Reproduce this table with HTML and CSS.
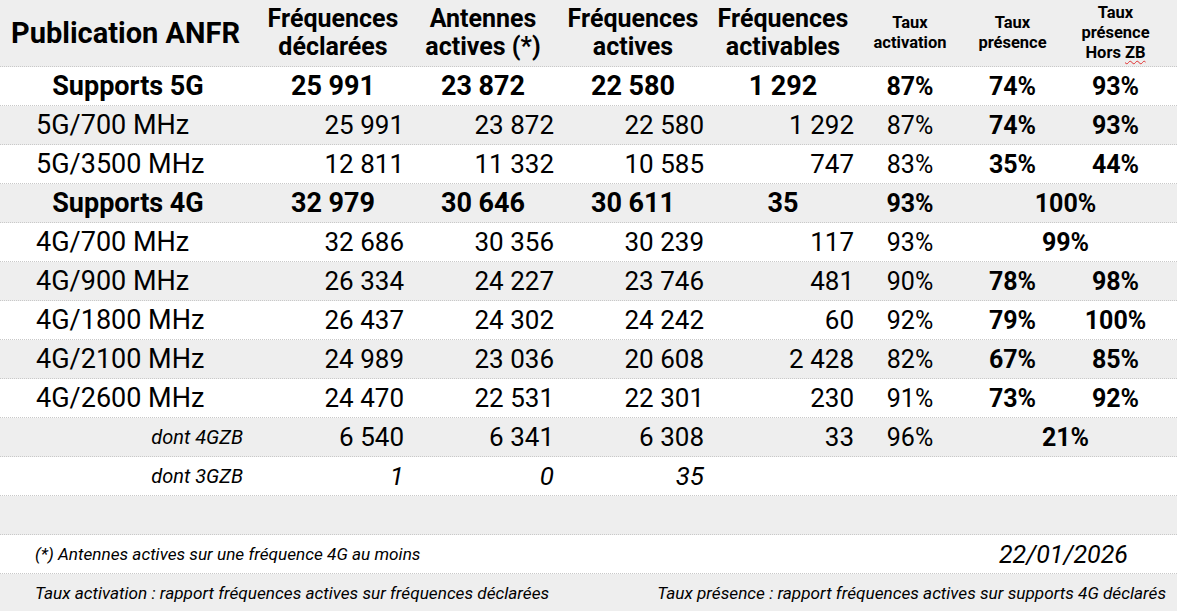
FILE: index.html
```html
<!DOCTYPE html>
<html lang="fr">
<head>
<meta charset="utf-8">
<title>Publication ANFR</title>
<link rel="stylesheet" href="styles.css">
</head>
<body>
<div class="sheet">
  <div class="row head">
    <div class="c title">Publication ANFR</div>
    <div class="c hcol">Fréquences<br>déclarées</div>
    <div class="c hcol">Antennes<br>actives (*)</div>
    <div class="c hcol">Fréquences<br>actives</div>
    <div class="c hcol">Fréquences<br>activables</div>
    <div class="c hsmall">Taux<br>activation</div>
    <div class="c hsmall">Taux<br>présence</div>
    <div class="c hsmall">Taux<br>présence<br>Hors <span class="spell">ZB</span></div>
    <div class="c"></div>
  </div>

  <div class="row white group">
    <div class="c label">Supports 5G</div>
    <div class="c ctr">25 991</div>
    <div class="c ctr">23 872</div>
    <div class="c ctr">22 580</div>
    <div class="c ctr">1 292</div>
    <div class="c pct">87%</div>
    <div class="c pct">74%</div>
    <div class="c pct">93%</div>
    <div class="c"></div>
  </div>

  <div class="row grey">
    <div class="c label">5G/700 MHz</div>
    <div class="c num">25 991</div>
    <div class="c num">23 872</div>
    <div class="c num">22 580</div>
    <div class="c num">1 292</div>
    <div class="c pct">87%</div>
    <div class="c pct b">74%</div>
    <div class="c pct b">93%</div>
    <div class="c"></div>
  </div>

  <div class="row white">
    <div class="c label">5G/3500 MHz</div>
    <div class="c num">12 811</div>
    <div class="c num">11 332</div>
    <div class="c num">10 585</div>
    <div class="c num">747</div>
    <div class="c pct">83%</div>
    <div class="c pct b">35%</div>
    <div class="c pct b">44%</div>
    <div class="c"></div>
  </div>

  <div class="row grey group">
    <div class="c label">Supports 4G</div>
    <div class="c ctr">32 979</div>
    <div class="c ctr">30 646</div>
    <div class="c ctr">30 611</div>
    <div class="c ctr">35</div>
    <div class="c pct">93%</div>
    <div class="c pct span3">100%</div>
  </div>

  <div class="row white">
    <div class="c label">4G/700 MHz</div>
    <div class="c num">32 686</div>
    <div class="c num">30 356</div>
    <div class="c num">30 239</div>
    <div class="c num">117</div>
    <div class="c pct">93%</div>
    <div class="c pct b span3">99%</div>
  </div>

  <div class="row grey">
    <div class="c label">4G/900 MHz</div>
    <div class="c num">26 334</div>
    <div class="c num">24 227</div>
    <div class="c num">23 746</div>
    <div class="c num">481</div>
    <div class="c pct">90%</div>
    <div class="c pct b">78%</div>
    <div class="c pct b">98%</div>
    <div class="c"></div>
  </div>

  <div class="row white">
    <div class="c label">4G/1800 MHz</div>
    <div class="c num">26 437</div>
    <div class="c num">24 302</div>
    <div class="c num">24 242</div>
    <div class="c num">60</div>
    <div class="c pct">92%</div>
    <div class="c pct b">79%</div>
    <div class="c pct b">100%</div>
    <div class="c"></div>
  </div>

  <div class="row grey">
    <div class="c label">4G/2100 MHz</div>
    <div class="c num">24 989</div>
    <div class="c num">23 036</div>
    <div class="c num">20 608</div>
    <div class="c num">2 428</div>
    <div class="c pct">82%</div>
    <div class="c pct b">67%</div>
    <div class="c pct b">85%</div>
    <div class="c"></div>
  </div>

  <div class="row white">
    <div class="c label">4G/2600 MHz</div>
    <div class="c num">24 470</div>
    <div class="c num">22 531</div>
    <div class="c num">22 301</div>
    <div class="c num">230</div>
    <div class="c pct">91%</div>
    <div class="c pct b">73%</div>
    <div class="c pct b">92%</div>
    <div class="c"></div>
  </div>

  <div class="row grey">
    <div class="c sub">dont 4GZB</div>
    <div class="c num">6 540</div>
    <div class="c num">6 341</div>
    <div class="c num">6 308</div>
    <div class="c num">33</div>
    <div class="c pct">96%</div>
    <div class="c pct b span3">21%</div>
  </div>

  <div class="row white">
    <div class="c sub">dont 3GZB</div>
    <div class="c num it">1</div>
    <div class="c num it">0</div>
    <div class="c num it">35</div>
    <div class="c"></div>
    <div class="c"></div>
    <div class="c"></div>
    <div class="c"></div>
    <div class="c"></div>
  </div>

  <div class="row grey blank"></div>

  <div class="row white note">
    <span class="note-text">(*) Antennes actives sur une fréquence 4G au moins</span>
    <span class="date">22/01/2026</span>
  </div>

  <div class="row grey note">
    <span class="note-text">Taux activation : rapport fréquences actives sur fréquences déclarées</span>
    <span class="note-text">Taux présence : rapport fréquences actives sur supports 4G déclarés</span>
  </div>
</div>
</body>
</html>
```

FILE: styles.css
```css
* { box-sizing: border-box; }

html, body {
  margin: 0;
  padding: 0;
  background: #ffffff;
}

body {
  font-family: Roboto, "Liberation Sans", sans-serif;
  color: #000000;
  width: 1177px;
  height: 611px;
  overflow: hidden;
}

.sheet {
  display: flex;
  flex-direction: column;
}

.row {
  display: grid;
  grid-template-columns: 262px 150px 150px 150px 150px 96px 109px 97px 1fr;
  height: 39px;
  border-bottom: 1px dotted #c9c9c9;
  align-items: center;
  flex: none;
}

.white { background: #ffffff; }
.grey { background: #eeeeee; }

.head {
  height: 67px;
  background: #eeeeee;
}

.c {
  white-space: nowrap;
  line-height: 1;
}

.title {
  font-weight: 700;
  font-size: 29px;
  padding-left: 11px;
}

.hcol {
  font-weight: 700;
  font-size: 25px;
  line-height: 28px;
  text-align: center;
  padding-right: 8px;
}

.hsmall {
  font-weight: 700;
  font-size: 16.5px;
  line-height: 20px;
  text-align: center;
}

.spell {
  text-decoration: underline wavy #e03030;
  text-decoration-thickness: 1px;
  text-underline-offset: 2px;
}

.label {
  font-size: 27px;
  padding-left: 36px;
}

.group .label {
  font-weight: 700;
  font-size: 27px;
  padding-left: 0;
  padding-right: 6px;
  text-align: center;
}

.num {
  font-size: 26px;
  text-align: right;
  padding-right: 8px;
}

.ctr {
  font-size: 27px;
  font-weight: 700;
  text-align: center;
  padding-right: 8px;
}

.pct {
  font-size: 25px;
  text-align: center;
}

.group .pct,
.pct.b {
  font-weight: 700;
}

.span3 {
  grid-column: span 3;
  padding-right: 4px;
}

.sub {
  font-style: italic;
  font-size: 20px;
  text-align: right;
  padding-right: 19px;
}

.it { font-style: italic; }

.note {
  display: flex;
  justify-content: space-between;
  align-items: center;
  padding: 0 11px 0 35px;
}

.note-text {
  font-style: italic;
  font-size: 17.2px;
}

.date {
  font-style: italic;
  font-size: 25px;
  padding-right: 38px;
}
```
